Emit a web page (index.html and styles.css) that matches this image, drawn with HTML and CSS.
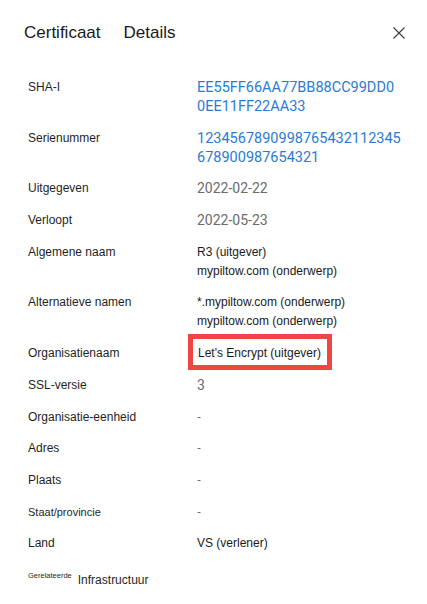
FILE: index.html
```html
<!DOCTYPE html>
<html lang="nl">
<head>
<meta charset="utf-8">
<title>Certificaat details</title>
<link rel="stylesheet" href="styles.css">
</head>
<body>
<div class="panel">
  <header class="header">
    <div class="tabs">
      <span class="tab">Certificaat</span>
      <span class="tab">Details</span>
    </div>
    <button class="close" aria-label="Sluiten">
      <svg width="12" height="12" viewBox="0 0 12 12"><path d="M0.5 0.5 L11.5 11.5 M11.5 0.5 L0.5 11.5" stroke="#3c3c3c" stroke-width="1.1" fill="none"/></svg>
    </button>
  </header>
  <div class="rows">
    <div class="row"><div class="label">SHA-I</div><div class="value link"><span class="line">EE55FF66AA77BB88CC99DD0</span><span class="line">0EE11FF22AA33</span></div></div>
    <div class="row"><div class="label">Serienummer</div><div class="value link"><span class="line">1234567890998765432112345</span><span class="line">678900987654321</span></div></div>
    <div class="row"><div class="label">Uitgegeven</div><div class="value muted">2022-02-22</div></div>
    <div class="row"><div class="label">Verloopt</div><div class="value muted">2022-05-23</div></div>
    <div class="row"><div class="label">Algemene naam</div><div class="value plain"><span class="line">R3 (uitgever)</span><span class="line">mypiltow.com (onderwerp)</span></div></div>
    <div class="row"><div class="label">Alternatieve namen</div><div class="value plain"><span class="line">*.mypiltow.com (onderwerp)</span><span class="line">mypiltow.com (onderwerp)</span></div></div>
    <div class="row"><div class="label">Organisatienaam</div><div class="value plain"><span class="highlight">Let's Encrypt (uitgever)</span></div></div>
    <div class="row"><div class="label">SSL-versie</div><div class="value muted">3</div></div>
    <div class="row"><div class="label">Organisatie-eenheid</div><div class="value dash">-</div></div>
    <div class="row"><div class="label">Adres</div><div class="value dash">-</div></div>
    <div class="row"><div class="label">Plaats</div><div class="value dash">-</div></div>
    <div class="row"><div class="label small">Staat/provincie</div><div class="value dash">-</div></div>
    <div class="row"><div class="label">Land</div><div class="value plain">VS (verlener)</div></div>
    <div class="row"><div class="label"><span class="tiny">Gerelateerde</span>Infrastructuur</div><div class="value"></div></div>
  </div>
</div>
</body>
</html>
```

FILE: styles.css
```css
html, body {
  margin: 0;
  padding: 0;
  background: #ffffff;
}

body {
  font-family: "Liberation Sans", Arial, sans-serif;
  color: #1f1f1f;
}

.panel {
  width: 427px;
  height: 604px;
  overflow: hidden;
}

.header {
  display: flex;
  justify-content: space-between;
  align-items: flex-start;
  padding: 23px 22px 0 24px;
  height: 20px;
}

.tabs {
  display: flex;
  gap: 23px;
}

.tab {
  font-size: 17px;
  line-height: 20px;
  color: #1a1a1a;
}

.close {
  margin: 4px 0 0 0;
  padding: 0;
  border: 0;
  background: none;
  width: 12px;
  height: 12px;
  display: block;
}

.close svg {
  display: block;
}

.rows {
  display: flex;
  flex-direction: column;
  gap: 12.7px;
  padding: 35px 0 0 28px;
}

.row {
  display: grid;
  grid-template-columns: 169px 1fr;
  align-items: start;
}

.label {
  font-size: 12px;
  line-height: 19px;
  color: #1f1f1f;
  white-space: nowrap;
}

.label.small {
  font-size: 11px;
}

.tiny {
  font-size: 7.5px;
  vertical-align: 6px;
  margin-right: 6px;
}

.value {
  line-height: 19px;
  white-space: nowrap;
}

.line {
  display: block;
}

.link {
  font-family: Roboto, "Liberation Sans", sans-serif;
  font-size: 14.5px;
  color: #2b7bd3;
}

.muted {
  font-family: Roboto, "Liberation Sans", sans-serif;
  font-size: 14px;
  color: #6b6b6b;
}

.plain {
  font-size: 12px;
  color: #1a1a1a;
}

.dash {
  font-size: 12px;
  color: #6b6b6b;
}

.highlight {
  position: relative;
  display: inline-block;
  padding-left: 1px;
}

.highlight::after {
  content: "";
  position: absolute;
  left: -9px;
  right: -11px;
  top: -10px;
  bottom: -7px;
  border: 5px solid #f04545;
}
```
